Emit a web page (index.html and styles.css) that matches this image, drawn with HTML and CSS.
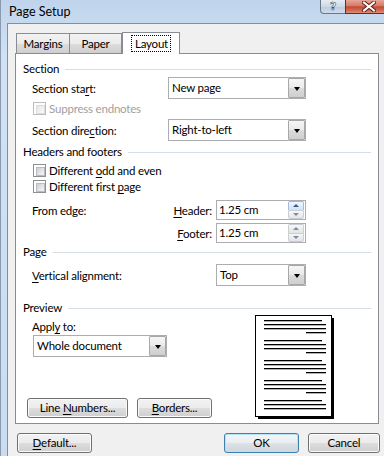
FILE: index.html
```html
<!DOCTYPE html>
<html>
<head>
<meta charset="utf-8">
<link rel="stylesheet" href="styles.css">
</head>
<body>
<div class="window">
  <div class="titlebar">
    <span class="title">Page Setup</span>
    <div class="caption-btns">
      <div class="cap help">?</div>
      <div class="cap close">
        <svg width="14" height="11" viewBox="0 0 14 11">
          <path d="M2 1.5 L12 9.5 M12 1.5 L2 9.5" stroke="#5a2018" stroke-width="4" stroke-linecap="square"/>
          <path d="M2 1.5 L12 9.5 M12 1.5 L2 9.5" stroke="#fff" stroke-width="2" stroke-linecap="square"/>
        </svg>
      </div>
    </div>
  </div>
  <div class="client">
    <div class="tabs">
      <div class="tab tab-margins">Margins</div>
      <div class="tab tab-paper">Paper</div>
      <div class="tab active"><span class="focus">Layout</span></div>
    </div>
    <div class="panel">
      <div class="heading">Section</div>
      <div class="row row-combo">
        <span class="lbl lbl-section">Section sta<u>r</u>t:</span>
        <div class="combo combo-wide"><span class="combo-val">New page</span><span class="combo-btn"><i class="tri"></i></span></div>
      </div>
      <div class="row row-check gap-1 disabled">
        <span class="cb"></span><span>Suppress endnotes</span>
      </div>
      <div class="row row-combo gap-3">
        <span class="lbl lbl-section">Section dire<u>c</u>tion:</span>
        <div class="combo combo-wide"><span class="combo-val">Right-to-left</span><span class="combo-btn"><i class="tri"></i></span></div>
      </div>
      <div class="heading gap-3">Headers and footers</div>
      <div class="row row-check gap-2">
        <span class="cb"></span><span>Different <u>o</u>dd and even</span>
      </div>
      <div class="row row-check">
        <span class="cb"></span><span>Different first <u>p</u>age</span>
      </div>
      <div class="edge-grid">
        <span>From edge:</span>
        <span class="spin-lbl"><u>H</u>eader:</span>
        <div class="spin"><span class="spin-val">1.25 cm</span><span class="spin-btns"><span class="sb up hot"><i class="arr-up"></i></span><span class="sb down"><i class="arr-down"></i></span></span></div>
        <span></span>
        <span class="spin-lbl"><u>F</u>ooter:</span>
        <div class="spin"><span class="spin-val">1.25 cm</span><span class="spin-btns"><span class="sb up"><i class="arr-up"></i></span><span class="sb down"><i class="arr-down"></i></span></span></div>
      </div>
      <div class="heading gap-1">Page</div>
      <div class="row row-combo gap-4">
        <span class="lbl lbl-valign"><u>V</u>ertical alignment:</span>
        <div class="combo combo-narrow"><span class="combo-val">Top</span><span class="combo-btn"><i class="tri"></i></span></div>
      </div>
      <div class="heading gap-14">Preview</div>
      <div class="preview">
        <div class="preview-left">
          <div class="row row-label"><span>Appl<u>y</u> to:</span></div>
          <div class="combo combo-apply"><span class="combo-val">Whole document</span><span class="combo-btn"><i class="tri"></i></span></div>
          <div class="preview-btns">
            <button class="btn btn-lines">Line <u>N</u>umbers...</button>
            <button class="btn btn-borders"><u>B</u>orders...</button>
          </div>
        </div>
        <svg class="page-pic" width="80" height="105" viewBox="0 0 80 105">
          <rect x="3" y="3" width="76" height="101" fill="#000"/>
          <rect x="0.5" y="0.5" width="76" height="101" fill="#fff" stroke="#000"/>
          <g fill="#000">
            <rect x="9" y="5" width="58" height="1.3"/><rect x="9" y="9" width="62" height="1.3"/><rect x="9" y="13" width="62" height="1.3"/><rect x="51" y="17" width="20" height="1.3"/>
            <rect x="9" y="25" width="58" height="1.3"/><rect x="9" y="29" width="62" height="1.3"/><rect x="9" y="33" width="62" height="1.3"/><rect x="51" y="37" width="20" height="1.3"/>
            <rect x="9" y="45" width="58" height="1.3"/><rect x="9" y="49" width="62" height="1.3"/><rect x="9" y="53" width="62" height="1.3"/><rect x="51" y="57" width="20" height="1.3"/>
            <rect x="9" y="65" width="58" height="1.3"/><rect x="9" y="69" width="62" height="1.3"/><rect x="9" y="73" width="62" height="1.3"/><rect x="51" y="77" width="20" height="1.3"/>
            <rect x="9" y="85" width="58" height="1.3"/><rect x="9" y="89" width="62" height="1.3"/><rect x="9" y="93" width="62" height="1.3"/>
          </g>
        </svg>
      </div>
    </div>
    <div class="footer">
      <button class="btn btn-default"><u>D</u>efault...</button>
      <button class="btn btn-ok primary">OK</button>
      <button class="btn btn-cancel">Cancel</button>
    </div>
  </div>
</div>
</body>
</html>
```
FILE: styles.css
```css
* { box-sizing: border-box; margin: 0; padding: 0; }
html, body { width: 384px; height: 456px; overflow: hidden; }
body {
  font-family: Lato, "Noto Sans", sans-serif;
  font-size: 11.5px;
  letter-spacing: -0.2px;
  color: #000;
  background: #cddef1;
}
u { text-decoration: underline; text-underline-offset: 2px; }

.window {
  width: 384px;
  height: 456px;
  display: flex;
  flex-direction: column;
  background: linear-gradient(#bfd4ec, #d2e2f4 60px, #cadcf0);
  border-left: 1px solid #8a9ab0;
}

.titlebar {
  height: 23px;
  display: flex;
  align-items: flex-start;
}
.title {
  padding: 4px 0 0 8px;
  font-size: 12.5px;
  letter-spacing: 0;
  line-height: 16px;
}
.caption-btns {
  margin-left: auto;
  margin-right: -5px;
  display: flex;
  height: 14px;
}
.cap {
  height: 14px;
  display: flex;
  align-items: center;
  justify-content: center;
  border: 1px solid #68778a;
  border-top: none;
}
.help {
  width: 25px;
  border-right: none;
  border-radius: 0 0 0 4px;
  background: linear-gradient(#e4edf7, #cdd9e6 50%, #bccbdc 51%, #d0dcea);
  font-family: "DejaVu Sans", sans-serif;
  font-weight: bold;
  font-size: 11px;
  color: #fff;
  -webkit-text-stroke: 0.6px #44505e;
  padding-bottom: 1px;
}
.close {
  width: 44px;
  border-color: #6e2a20;
  background: linear-gradient(#e8a598, #d57a68 45%, #c24b36 52%, #cf6a52 80%, #e2907a);
  justify-content: flex-start;
  padding-left: 16px;
}

.client {
  flex: 1;
  margin-left: 6px;
  background: #f0f0f0;
  border-left: 1px solid #7e8ea3;
  border-top: 1px solid #7e8ea3;
  padding-top: 8px;
}

.tabs {
  display: flex;
  align-items: flex-end;
  height: 21px;
  margin-left: 7px;
  padding-left: 1px;
  position: relative;
  z-index: 1;
}
.tab {
  height: 20px;
  border: 1px solid #898c95;
  border-bottom: none;
  background: linear-gradient(#f3f3f3, #ebebeb 50%, #dddddd 51%, #cfcfcf);
  display: flex;
  align-items: center;
  justify-content: center;
  line-height: 14px;
  padding-top: 1px;
}
.tab-margins { width: 54px; }
.tab-paper { width: 52px; border-left: none; }
.tab.active {
  width: 58px;
  height: 22px;
  margin-bottom: -1px;
  background: #fff;
  padding-top: 0;
  align-items: flex-start;
}
.focus {
  margin-top: 2px;
  padding: 1px 3px 1px 4px;
  outline: 1px dotted #000;
  outline-offset: -1px;
  line-height: 15px;
}

.panel {
  margin-left: 7px;
  width: 364px;
  height: 371px;
  border: 1px solid #898c95;
  background: #fff;
  padding: 7px 7px 0 7px;
  display: flex;
  flex-direction: column;
}

.heading {
  height: 16px;
  display: flex;
  align-items: center;
  line-height: 16px;
}
.heading::after {
  content: "";
  flex: 1;
  height: 1px;
  margin-left: 6px;
  background: #d5dfe5;
}

.gap-1 { margin-top: 1px; }
.gap-2 { margin-top: 2px; }
.gap-3 { margin-top: 3px; }
.gap-4 { margin-top: 4px; }
.gap-14 { margin-top: 14px; }

.row {
  display: flex;
  align-items: center;
  padding-left: 9px;
}
.row-combo { height: 22px; }
.row-check { height: 16px; padding-left: 10px; gap: 3px; }
.row-label { height: 16px; }
.lbl-section { width: 136px; }
.lbl-valign { width: 184px; }

.disabled { color: #a0a0a0; }

.combo {
  height: 22px;
  border: 1px solid #abadb3;
  background: #fff;
  display: flex;
  align-items: stretch;
}
.combo-wide { width: 138px; }
.combo-narrow { width: 90px; }
.combo-apply { width: 134px; margin-left: 10px; margin-top: 1px; }
.combo-val {
  flex: 1;
  padding-left: 3px;
  line-height: 20px;
}
.combo-btn {
  width: 17px;
  border: 1px solid #a7a7a7;
  border-radius: 1px;
  background: linear-gradient(#f6f6f6, #e9e9e9 50%, #dbdbdb 51%, #cfcfcf);
  display: flex;
  align-items: center;
  justify-content: center;
}
.tri {
  width: 0;
  height: 0;
  border-left: 3.5px solid transparent;
  border-right: 3.5px solid transparent;
  border-top: 4px solid #000;
  margin-top: 1px;
}

.cb {
  width: 13px;
  height: 13px;
  border: 1px solid #8e8f8f;
  background: #fff;
  padding: 2px;
  flex: none;
}
.cb::after {
  content: "";
  display: block;
  width: 7px;
  height: 7px;
  border: 1px solid #b8bcc2;
  background: linear-gradient(135deg, #cbcfd5, #f7f7f8);
}
.disabled .cb { border-color: #bcbcbc; }
.disabled .cb::after { border-color: #dcdcdc; background: linear-gradient(135deg, #e6e6e6, #fafafa); }

.edge-grid {
  margin-top: 6px;
  padding-left: 9px;
  display: grid;
  grid-template-columns: 136px 48px 90px;
  grid-auto-rows: 20px;
  row-gap: 3px;
  align-items: center;
}
.spin-lbl { text-align: right; padding-right: 4px; }
.spin {
  height: 20px;
  border: 1px solid #abadb3;
  display: flex;
}
.spin-val { flex: 1; padding-left: 2px; line-height: 18px; }
.spin-btns {
  width: 16px;
  margin: 0 1px 0 0;
  display: flex;
  flex-direction: column;
}
.sb {
  flex: 1;
  display: flex;
  align-items: center;
  justify-content: center;
  border: 1px solid #c9cdd4;
  background: linear-gradient(#f7f7f7, #e4e4e4);
}
.sb.up { border-bottom: none; border-radius: 2px 2px 0 0; }
.sb.down { border-radius: 0 0 2px 2px; }
.sb.hot { background: linear-gradient(#eef6fd, #cfe4f8); border-color: #9fbbdd; }
.arr-up, .arr-down {
  width: 0;
  height: 0;
  border-left: 3.5px solid transparent;
  border-right: 3.5px solid transparent;
}
.arr-up { border-bottom: 3px solid #7b8ba5; }
.arr-down { border-top: 3px solid #7b8ba5; }
.hot .arr-up { border-bottom-color: #3b5a8c; }

.preview {
  display: flex;
  align-items: flex-start;
}
.preview-left {
  width: 232px;
  display: flex;
  flex-direction: column;
  padding-top: 2px;
}
.preview-btns {
  display: flex;
  gap: 9px;
  margin-top: 41px;
  margin-left: 4px;
}
.page-pic { margin-top: -1px; display: block; }

.btn {
  height: 20px;
  border: 1px solid #707070;
  border-radius: 3px;
  background: linear-gradient(#f2f2f2, #ebebeb 50%, #dddddd 51%, #cfcfcf);
  box-shadow: inset 0 0 0 1px #fbfbfb;
  font-family: inherit;
  font-size: 11.5px;
  letter-spacing: -0.2px;
  color: #000;
  line-height: 16px;
  text-align: center;
}
.btn-lines { width: 101px; }
.btn-borders { width: 75px; }

.footer {
  display: flex;
  padding: 9px 0 0 9px;
}
.btn-default { width: 75px; }
.btn-ok { width: 75px; margin-left: auto; }
.btn-cancel { width: 72px; margin-left: 9px; margin-right: 4px; }
.primary {
  border-color: #3c7fb1;
  box-shadow: inset 0 0 0 1px #b7e3f8;
  background: linear-gradient(#f2f6f9, #eaeef1 50%, #dce2e6 51%, #cfd6db);
}
```
